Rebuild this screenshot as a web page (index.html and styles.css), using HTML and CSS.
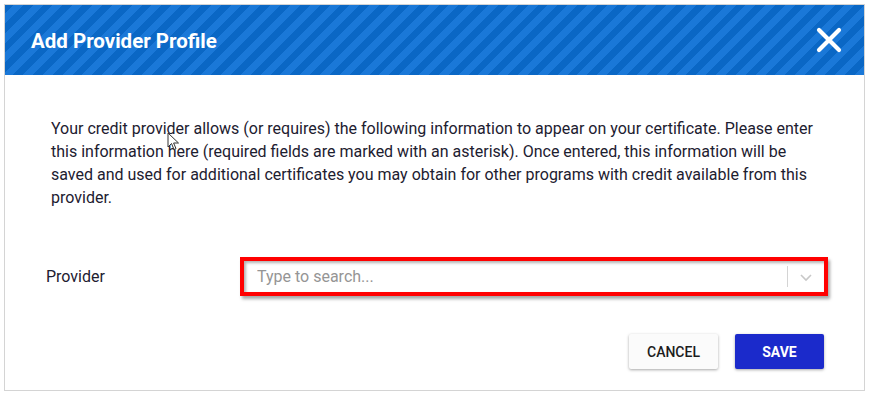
FILE: index.html
```html
<html>
  <head>
    <title>Add Provider Profile</title>
    <link rel="stylesheet" href="styles.css">
  </head>
  <body>
    <section class="dialog">
      <header class="dialog-header">
        <h1>Add Provider Profile</h1>
        <button class="close" aria-label="Close">
          <svg width="26" height="26" viewBox="0 0 26 26">
            <path d="M3 3 L23 23 M23 3 L3 23" stroke="#fff" stroke-width="4.2" stroke-linecap="round" fill="none" />
          </svg>
        </button>
      </header>

      <main class="dialog-body">
        <p class="intro">
          Your credit provider allows (or requires) the following information to appear on your certificate. Please enter
          this information here (required fields are marked with an asterisk). Once entered, this information will be
          saved and used for additional certificates you may obtain for other programs with credit available from this
          provider.
        </p>

        <div class="field">
          <label for="provider">Provider</label>
          <div class="highlight">
            <div class="select">
              <input id="provider" type="text" placeholder="Type to search..." />
              <span class="separator"></span>
              <span class="chevron">
                <svg width="14" height="10" viewBox="0 0 14 10">
                  <path d="M2 3 L7 8 L12 3" stroke="#c8c8c8" stroke-width="1.6" fill="none" />
                </svg>
              </span>
            </div>
          </div>
        </div>

        <div class="actions">
          <button class="btn btn-cancel">CANCEL</button>
          <button class="btn btn-save">SAVE</button>
        </div>
      </main>

      <svg class="cursor" width="14" height="20" viewBox="0 0 14 20">
        <path d="M1 1 L1 15 L4.5 11.5 L7 17.5 L9 16.6 L6.6 11 L11.5 11 Z" fill="#fff" stroke="#333" stroke-width="1" />
      </svg>
    </section>
  </body>
</html>
```

FILE: styles.css
```css
html,
body {
  padding: 0;
  margin: 0;
  font-family: Roboto, "Liberation Sans", sans-serif;
  background: #fff;
}

body {
  padding: 4px;
}

.dialog {
  position: relative;
  width: 861px;
  height: 387px;
  box-sizing: border-box;
  border: 1px solid #d4d4d4;
  background: #fff;
}

.dialog-header {
  display: flex;
  justify-content: space-between;
  align-items: center;
  height: 70px;
  padding: 0 20px 0 26px;
  background: repeating-linear-gradient(
    -45deg,
    #1a78d8 0,
    #1a78d8 7px,
    #0a67c5 7px,
    #0a67c5 14px
  );
}

.dialog-header h1 {
  margin: 0;
  color: #fff;
  font-size: 20.5px;
  font-weight: 700;
  padding-top: 1px;
}

.close {
  border: none;
  background: none;
  padding: 0;
  width: 26px;
  height: 26px;
  margin-right: 2px;
  cursor: pointer;
}

.dialog-body {
  padding: 42px 36px 0 41px;
}

.intro {
  margin: 0 0 48px 5px;
  width: 775px;
  font-size: 16px;
  line-height: 23px;
  color: #1d2030;
}

.field {
  display: flex;
  align-items: center;
}

.field label {
  width: 194px;
  flex-shrink: 0;
  font-size: 16px;
  color: #1d2030;
}

.highlight {
  width: 588px;
  height: 39px;
  flex-shrink: 0;
  box-sizing: border-box;
  border: 4px solid #ff0000;
  box-shadow: 2px 3px 3px rgba(0, 0, 0, 0.35);
}

.select {
  display: flex;
  align-items: center;
  height: 100%;
  box-shadow: inset 2px 2px 3px rgba(0, 0, 0, 0.3);
  background: #fff;
}

.select input {
  flex: 1;
  border: none;
  outline: none;
  background: transparent;
  padding: 0 13px;
  font-family: Roboto, "Liberation Sans", sans-serif;
  font-size: 16px;
}

.select input::placeholder {
  color: #959595;
}

.separator {
  width: 1px;
  height: 21px;
  background: #d4d4d4;
}

.chevron {
  display: flex;
  justify-content: center;
  width: 36px;
}

.actions {
  display: flex;
  justify-content: flex-end;
  gap: 17px;
  margin: 38px 4px 0 0;
}

.btn {
  width: 89px;
  height: 35px;
  border: none;
  border-radius: 2px;
  font-family: Roboto, "Liberation Sans", sans-serif;
  font-size: 14px;
  font-weight: 500;
  box-shadow: 0 1px 3px rgba(0, 0, 0, 0.35);
}

.btn-cancel {
  background: #fbfbfb;
  color: #1d1d1d;
}

.btn-save {
  background: #1b2acb;
  color: #fff;
  font-weight: 700;
}

.cursor {
  position: absolute;
  left: 162px;
  top: 127px;
}
```
